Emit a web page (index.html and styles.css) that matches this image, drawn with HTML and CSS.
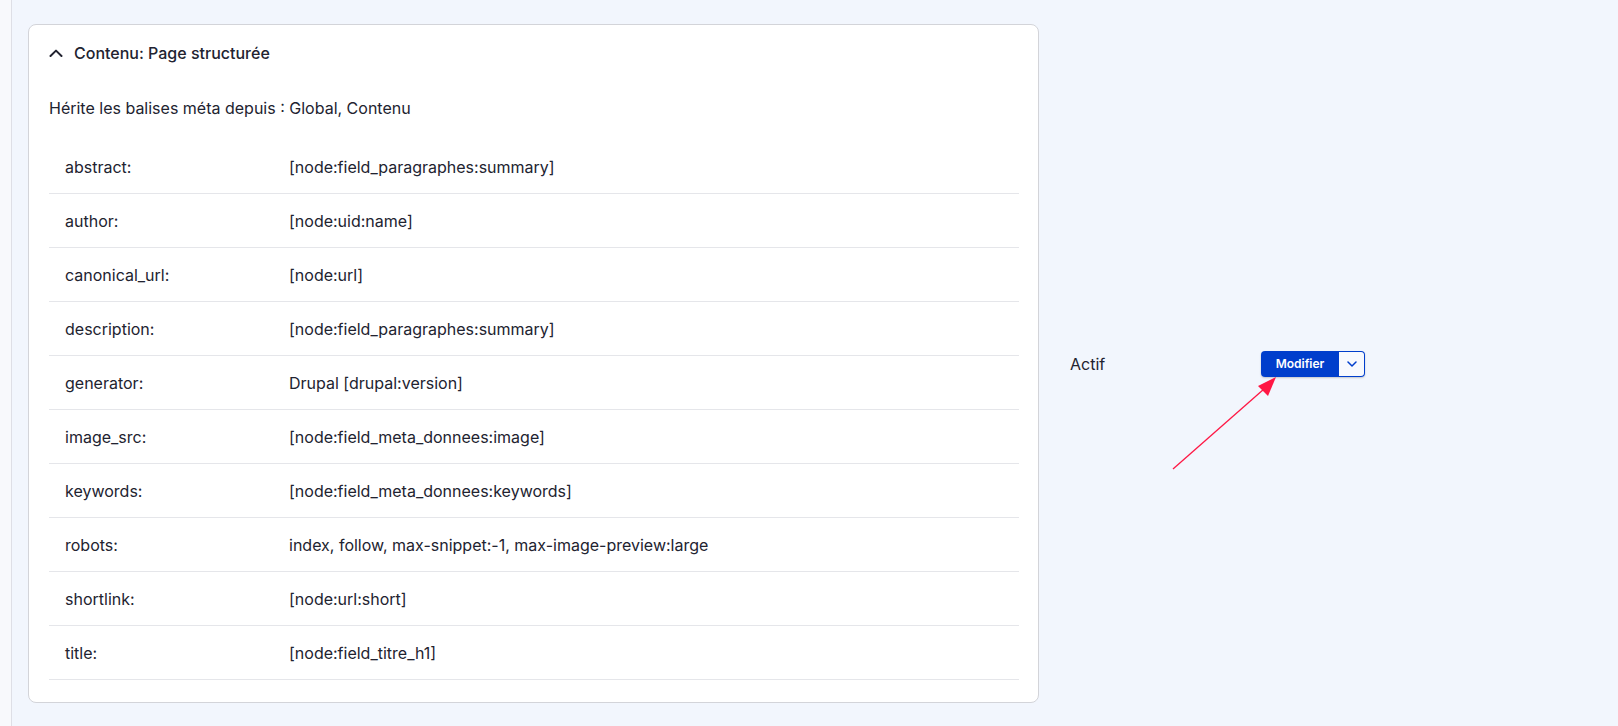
FILE: index.html
```html
<!DOCTYPE html>
<html lang="fr">

<head>
    <meta charset="UTF-8">
    <meta name="viewport" content="width=device-width, initial-scale=1.0">
    <title>Balises méta</title>
    <link rel="stylesheet" href="styles.css">
</head>

<body>
    <div class="page">
        <div class="meta-row">
            <div class="details">
                <div class="details-summary">
                    <svg class="chevron" width="14" height="8" viewBox="0 0 14 8">
                        <path d="M1.5 7 L7 1.6 L12.5 7" fill="none" stroke="#222330" stroke-width="2" stroke-linecap="round" stroke-linejoin="round"/>
                    </svg>
                    <span>Contenu: Page structurée</span>
                </div>
                <div class="details-body">
                    <p class="inherits">Hérite les balises méta depuis : Global, Contenu</p>
                    <table class="tags">
                        <tr><td class="tag-name">abstract:</td><td>[node:field_paragraphes:summary]</td></tr>
                        <tr><td class="tag-name">author:</td><td>[node:uid:name]</td></tr>
                        <tr><td class="tag-name">canonical_url:</td><td>[node:url]</td></tr>
                        <tr><td class="tag-name">description:</td><td>[node:field_paragraphes:summary]</td></tr>
                        <tr><td class="tag-name">generator:</td><td>Drupal [drupal:version]</td></tr>
                        <tr><td class="tag-name">image_src:</td><td>[node:field_meta_donnees:image]</td></tr>
                        <tr><td class="tag-name">keywords:</td><td>[node:field_meta_donnees:keywords]</td></tr>
                        <tr><td class="tag-name">robots:</td><td>index, follow, max-snippet:-1, max-image-preview:large</td></tr>
                        <tr><td class="tag-name">shortlink:</td><td>[node:url:short]</td></tr>
                        <tr><td class="tag-name">title:</td><td>[node:field_titre_h1]</td></tr>
                    </table>
                </div>
            </div>
            <div class="status">Actif</div>
            <div class="operations">
                <div class="dropbutton">
                    <button class="dropbutton-action">Modifier</button>
                    <button class="dropbutton-toggle">
                        <svg width="10" height="6" viewBox="0 0 10 6">
                            <path d="M1 1 L5 5 L9 1" fill="none" stroke="#003ecc" stroke-width="1.5" stroke-linecap="round" stroke-linejoin="round"/>
                        </svg>
                    </button>
                </div>
            </div>
        </div>
    </div>

    <!-- annotation arrow drawn over the screenshot -->
    <svg class="annotation" width="1618" height="726" viewBox="0 0 1618 726">
        <line x1="1173" y1="469" x2="1264" y2="389" stroke="#ff1744" stroke-width="1.3"/>
        <polygon points="1276,377 1258,386 1268,396" fill="#ff1744"/>
    </svg>
</body>

</html>
```

FILE: styles.css
```css
html,
body {
    margin: 0;
    height: 100%;
}

body {
    font-family: Inter, "Noto Sans", sans-serif;
    font-size: 16px;
    color: #222330;
    background-color: #f8f9fc;
    padding-left: 11px;
    position: relative;
    overflow: hidden;
}

.page {
    height: 100%;
    background-color: #f2f6fd;
    border-left: 1px solid #dedfe6;
    padding: 24px 0 0 16px;
    box-sizing: border-box;
}

.meta-row {
    display: flex;
    align-items: center;
}

.details {
    width: 1011px;
    background-color: #fff;
    border: 1px solid #d3d4d9;
    border-radius: 8px;
    box-sizing: border-box;
}

.details-summary {
    display: flex;
    align-items: center;
    padding: 18px 20px;
    line-height: 20px;
    font-weight: 500;
    font-size: 16px;
}

.chevron {
    margin-right: 11px;
}

.details-body {
    padding: 0 19px 22px 20px;
}

.inherits {
    margin: 17px 0 22px 0;
    line-height: 20px;
}

.tags {
    width: 100%;
    border-collapse: collapse;
}

.tags td {
    height: 53px;
    padding: 0 16px;
    border-bottom: 1px solid #e5e6ea;
    line-height: 20px;
    vertical-align: middle;
}

.tags .tag-name {
    width: 192px;
}

.status {
    margin-left: 31px;
    width: 191px;
}

.dropbutton {
    display: flex;
    height: 26px;
    border-radius: 4px;
    box-shadow: 0 1px 2px rgba(0, 0, 0, 0.2);
}

.dropbutton button {
    font-family: Inter, "Noto Sans", sans-serif;
    cursor: pointer;
}

.dropbutton-action {
    width: 78px;
    background-color: #003ecc;
    color: #fff;
    border: none;
    border-radius: 4px 0 0 4px;
    font-size: 12px;
    font-weight: 600;
    padding: 0;
}

.dropbutton-toggle {
    width: 26px;
    background-color: #f7f9fe;
    border: 1px solid #003ecc;
    border-left: none;
    border-radius: 0 4px 4px 0;
    padding: 0;
    display: flex;
    align-items: center;
    justify-content: center;
}

.annotation {
    position: absolute;
    left: 0;
    top: 0;
    pointer-events: none;
}
```
